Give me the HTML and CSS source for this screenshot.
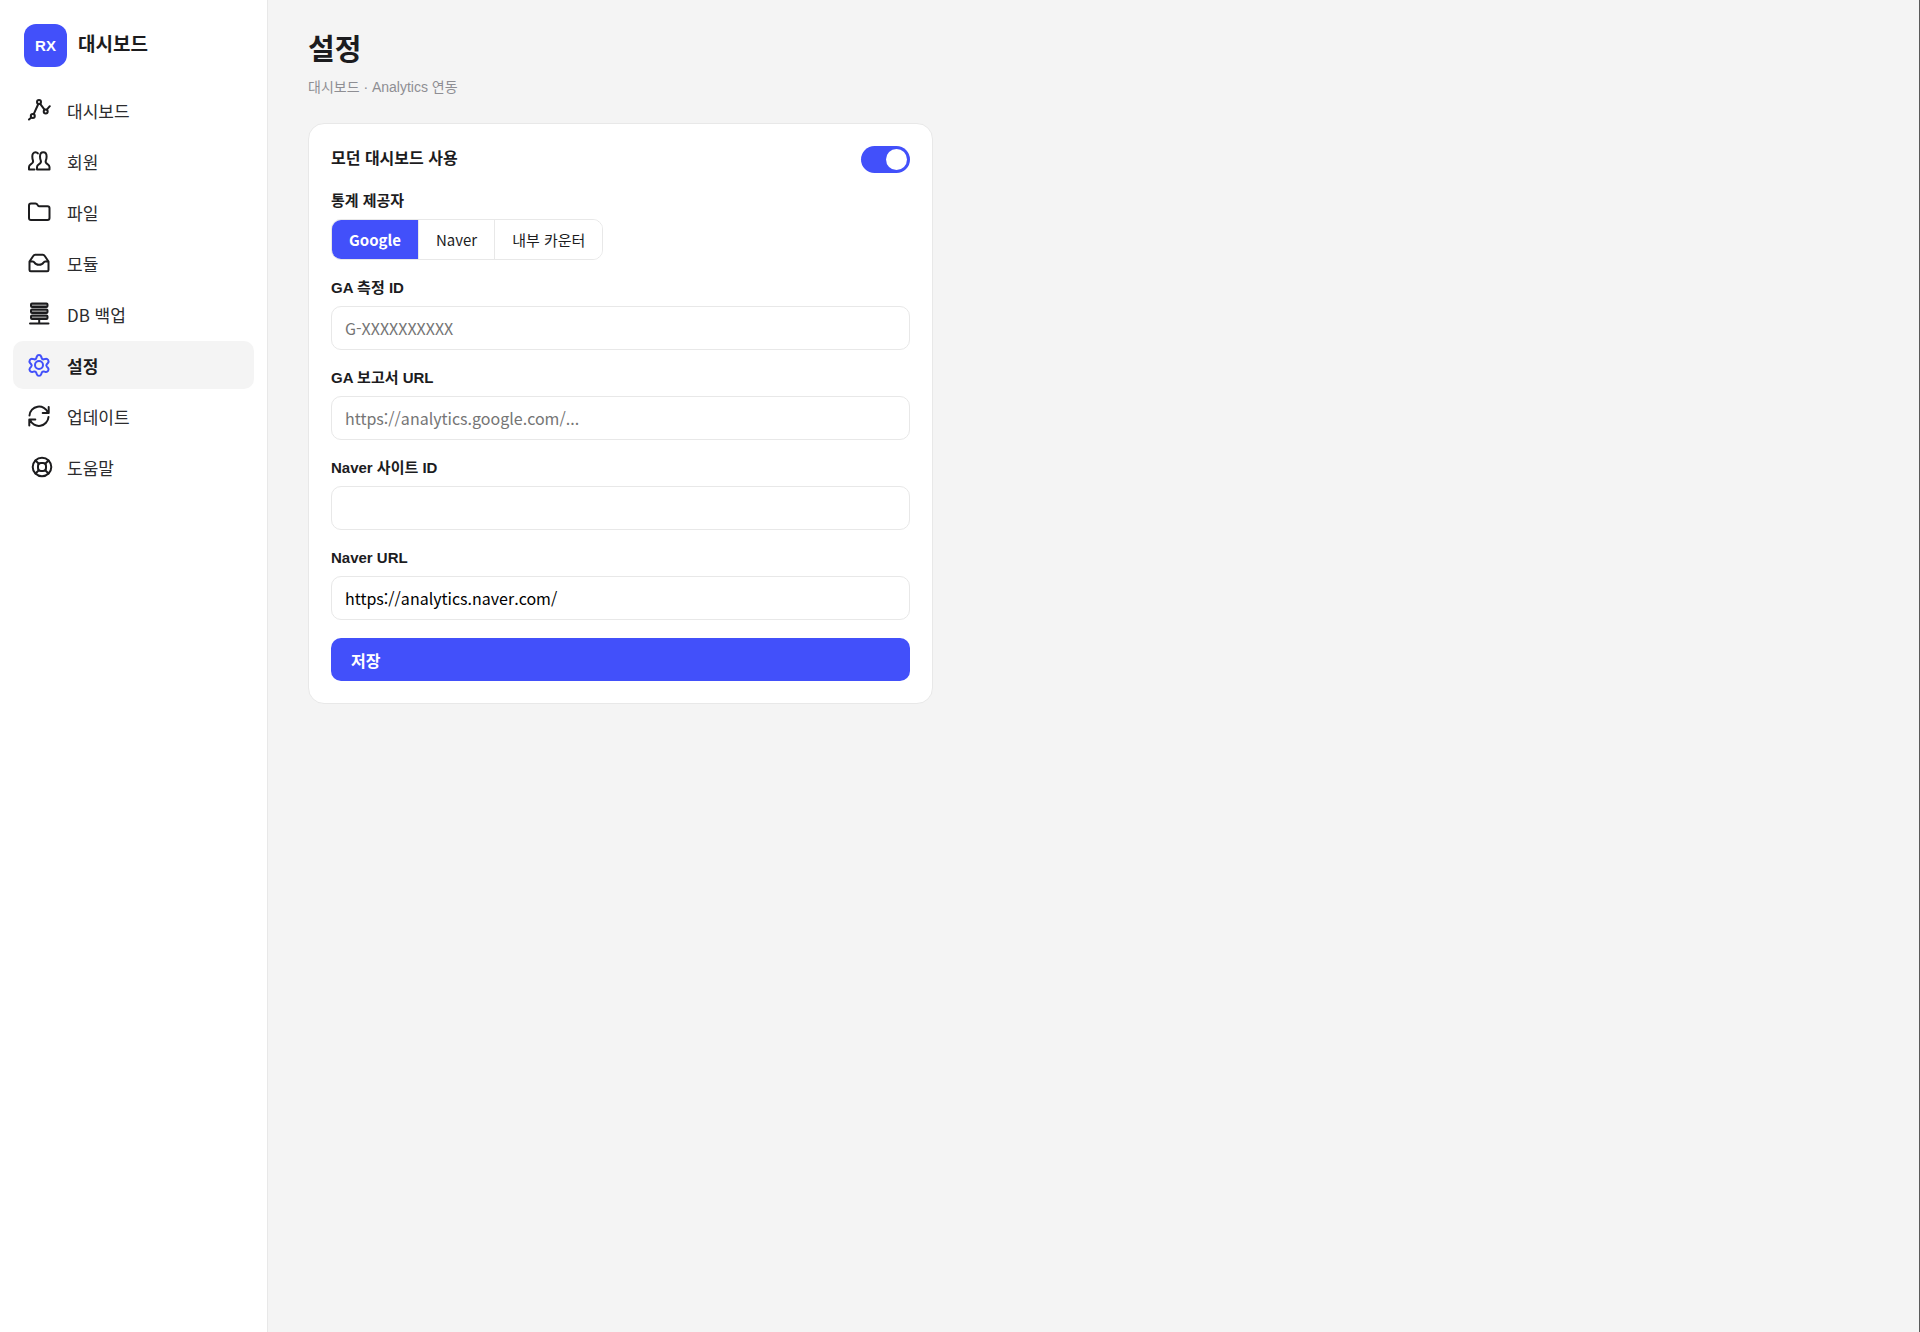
FILE: index.html
```
<!DOCTYPE html>
<html lang="ko">
<head>
    <meta charset="UTF-8">
    <meta name="viewport" content="width=device-width, initial-scale=1.0">
    <title>설정</title>
    <link rel="stylesheet" href="styles.css">
</head>
<body>
    <aside class="sidebar">
        <div class="brand">
            <span class="brand-logo">RX</span>
            <span class="brand-name">대시보드</span>
        </div>
        <nav class="menu">
            <a class="menu-item" href="#">
                <svg class="icon" viewBox="0 0 24 24"><circle cx="5.800" cy="18" r="2"/><circle cx="12" cy="4" r="2"/><circle cx="18.700" cy="13.400" r="2"/><path d="M2 21.500l2.300-2M6.700 16.200L11.300 6M13.200 5.800l4.300 5.800M19.800 11.600l3-3.400"/></svg>
                <span>대시보드</span>
            </a>
            <a class="menu-item" href="#">
                <svg class="icon" viewBox="0 0 24 24"><path d="M7.500 20.500H2v-2.600c0-1.200.7-2 2-2.800 1.600-1 2.500-2 2-3.500-.5-1.200-.7-2.200-.7-4C5.300 5 6.300 3.300 8.500 3.300c1.100 0 1.900.4 2.400 1.100"/><path d="M10 20.500h12.500v-2.600c0-1.200-.7-2-2-2.800-1.600-1-2.300-2-1.700-3.500.6-1.200.8-2.200.8-4 0-2.600-1.100-4.300-3.300-4.300S13 5 13 7.600c0 1.800.2 2.800.8 4 .6 1.500-.1 2.500-1.700 3.500-1.300.8-2.100 1.600-2.100 2.800z"/></svg>
                <span>회원</span>
            </a>
            <a class="menu-item" href="#">
                <svg class="icon" viewBox="0 0 24 24"><path d="M2 5.500C2 4.200 2.700 3.500 4 3.500h4.500c.9 0 1.400.3 1.800 1l.8 1.200c.3.400.6.500 1 .5H20.500c1.300 0 2 .7 2 2v9.800c0 1.300-.7 2-2 2H4c-1.300 0-2-.7-2-2z"/></svg>
                <span>파일</span>
            </a>
            <a class="menu-item" href="#">
                <svg class="icon" viewBox="0 0 24 24"><path d="M2.500 10.500L6.200 5c.5-.8 1-1.200 2-1.200h7.600c1 0 1.500.4 2 1.200l3.700 5.500V19c0 1-.3 1.300-1.300 1.300H3.800c-1 0-1.300-.3-1.300-1.300zM2.500 10.500h3.300c.8 0 1.200.3 1.600 1 .8 1.400 2.400 2.300 4.600 2.300s3.800-.9 4.600-2.300c.4-.7.8-1 1.600-1h3.300"/></svg>
                <span>모듈</span>
            </a>
            <a class="menu-item" href="#">
                <svg class="icon icon-db" viewBox="0 0 24 24"><rect x="4" y="1.500" width="16.500" height="3.500" rx="1"/><rect x="4" y="7.500" width="16.500" height="3.500" rx="1"/><rect x="4" y="13.500" width="16.500" height="3.500" rx="1"/><path d="M12.200 17v4.500M3 21.500h18.500"/></svg>
                <span>DB 백업</span>
            </a>
            <a class="menu-item active" href="#">
                <svg class="icon" viewBox="0 0 24 24"><circle cx="12" cy="12" r="4"/><path d="M14.200 3.600l.5 1.500c.3.900 1.200 1.400 2.100 1.200l1.600-.4c2.400-.5 4.100 2.300 2.500 4.100l-1.100 1.200c-.6.700-.6 1.700 0 2.400l1.100 1.200c1.600 1.800-.1 4.600-2.500 4.100l-1.600-.4c-.9-.2-1.800.3-2.100 1.200l-.5 1.500c-.7 2.200-3.700 2.200-4.400 0l-.5-1.500c-.3-.9-1.200-1.400-2.100-1.200l-1.600.4c-2.400.5-4.100-2.300-2.500-4.100l1.100-1.200c.6-.7.6-1.700 0-2.400L3.100 10C1.500 8.200 3.200 5.400 5.600 5.900l1.600.4c.9.200 1.800-.3 2.100-1.200l.5-1.500c.7-2.200 3.700-2.200 4.400 0z"/></svg>
                <span>설정</span>
            </a>
            <a class="menu-item" href="#">
                <svg class="icon" viewBox="0 0 24 24"><path d="M21.700 3v6h-6M2.300 21.500v-6h6M21 8.600A9.600 9.600 0 0 0 2.500 11.500M3 15.800A9.600 9.600 0 0 0 21.500 13"/></svg>
                <span>업데이트</span>
            </a>
            <a class="menu-item" href="#">
                <svg class="icon icon-help" viewBox="0 0 24 24"><circle cx="12" cy="12" r="9.300"/><rect x="8" y="8" width="8" height="8" rx="3"/><path d="M5.500 5.500l3.300 3.300M18.500 5.500l-3.300 3.300M5.500 18.500l3.300-3.300M18.500 18.500l-3.300-3.300"/></svg>
                <span>도움말</span>
            </a>
        </nav>
    </aside>

    <main class="content">
        <h1>설정</h1>
        <p class="subtitle">대시보드 · Analytics 연동</p>

        <form class="card">
            <div class="toggle-row">
                <label for="useModern">모던 대시보드 사용</label>
                <input class="toggle" type="checkbox" id="useModern" checked>
            </div>
            <fieldset class="field">
                <legend>통계 제공자</legend>
                <div class="segment">
                    <button type="button" class="active">Google</button>
                    <button type="button">Naver</button>
                    <button type="button">내부 카운터</button>
                </div>
            </fieldset>
            <div class="field">
                <label for="gaId">GA 측정 ID</label>
                <input type="text" id="gaId" placeholder="G-XXXXXXXXXX">
            </div>
            <div class="field">
                <label for="gaUrl">GA 보고서 URL</label>
                <input type="text" id="gaUrl" placeholder="https://analytics.google.com/...">
            </div>
            <div class="field">
                <label for="naverId">Naver 사이트 ID</label>
                <input type="text" id="naverId">
            </div>
            <div class="field">
                <label for="naverUrl">Naver URL</label>
                <input type="text" id="naverUrl" value="https://analytics.naver.com/">
            </div>
            <button type="submit" class="save">저장</button>
        </form>
    </main>
</body>
</html>
```
FILE: styles.css
```
* {
    box-sizing: border-box;
}
body {
    display: flex;
    min-height: 100vh;
    margin: 0;
    background-color: #f4f4f4;
    border-right: 1px solid #5a5a5a;
    color: #1c1c1e;
    font-family: "Liberation Sans", "Noto Sans CJK KR", sans-serif;
    font-size: 14px;
}

/* Sidebar */
.sidebar {
    flex: none;
    width: 268px;
    padding: 24px 13px;
    background-color: #fff;
    border-right: 1px solid #e8e8e8;
}
.brand {
    display: flex;
    align-items: center;
    gap: 11px;
    padding: 0 11px;
    margin-bottom: 19px;
}
.brand-logo {
    display: flex;
    justify-content: center;
    align-items: center;
    width: 43px;
    height: 43px;
    border-radius: 12px;
    background-color: #4250fa;
    color: #fff;
    font-size: 15px;
    font-weight: bold;
}
.brand-name {
    padding-bottom: 2px;
    font-size: 19px;
    font-weight: bold;
    line-height: 24px;
}
.menu {
    display: flex;
    flex-direction: column;
    gap: 3px;
}
.menu-item {
    display: flex;
    align-items: center;
    gap: 16px;
    height: 48px;
    padding: 0 14px;
    border-radius: 10px;
    color: #2c2c2e;
    font-family: "Noto Sans CJK KR", sans-serif;
    font-size: 17px;
    text-decoration: none;
}
.menu-item.active {
    background-color: #f4f4f4;
    color: #1c1c1e;
    font-weight: bold;
}
.icon {
    width: 24px;
    height: 24px;
    fill: none;
    stroke: #1c1c1e;
    stroke-width: 2;
    stroke-linecap: round;
    stroke-linejoin: round;
}
.icon-db {
    fill: #888;
}
.icon-help {
    margin: 0 -3px 0 3px;
}
.active .icon {
    stroke: #4250fa;
}

/* Settings */
.content {
    flex: 1;
    padding: 28px 40px;
}
h1 {
    margin: 0;
    font-size: 29px;
    line-height: 44px;
}
.subtitle {
    margin: 4px 0 25px;
    color: #8e8e93;
    font-size: 14px;
    line-height: 22px;
}
.card {
    display: flex;
    flex-direction: column;
    gap: 18px;
    max-width: 625px;
    padding: 22px;
    background-color: #fff;
    border: 1px solid #e8e8e8;
    border-radius: 16px;
}
.toggle-row {
    display: flex;
    justify-content: space-between;
    align-items: flex-start;
    font-size: 16px;
    font-weight: bold;
    line-height: 26px;
}
.toggle {
    appearance: none;
    display: flex;
    justify-content: flex-end;
    align-items: center;
    width: 49px;
    height: 27px;
    margin: 0;
    padding: 0 3px;
    border-radius: 14px;
    background-color: #ccc;
}
.toggle:not(:checked) {
    justify-content: flex-start;
}
.toggle:checked {
    background-color: #4250fa;
}
.toggle::before {
    content: "";
    width: 21px;
    height: 21px;
    border-radius: 50%;
    background-color: #fff;
}
.field {
    display: flex;
    flex-direction: column;
    gap: 8px;
    min-width: 0;
    margin: 0;
    padding: 0;
    border: none;
}
.field label,
legend {
    padding: 0;
    font-size: 15px;
    font-weight: bold;
    line-height: 20px;
}
legend {
    margin-bottom: 8px;
}
.field input {
    width: 100%;
    height: 44px;
    padding: 0 13px;
    background-color: #fff;
    border: 1px solid #e8e8e8;
    border-radius: 10px;
    color: #000;
    font-family: "Noto Sans CJK KR", sans-serif;
    font-size: 16px;
}
.field input::placeholder {
    color: #757575;
}
.segment {
    display: flex;
    width: fit-content;
    overflow: hidden;
    border: 1px solid #e8e8e8;
    border-radius: 10px;
}
.segment button {
    height: 39px;
    padding: 0 17px;
    background-color: #fff;
    border: none;
    border-left: 1px solid #e8e8e8;
    color: #1c1c1e;
    font-family: "Noto Sans CJK KR", sans-serif;
    font-size: 15px;
}
.segment button:first-child {
    border-left: none;
}
.segment button.active {
    background-color: #4250fa;
    color: #fff;
    font-weight: bold;
}
.save {
    height: 43px;
    padding: 0 20px;
    background-color: #4250fa;
    border: none;
    border-radius: 10px;
    color: #fff;
    font-family: "Noto Sans CJK KR", sans-serif;
    font-size: 16px;
    font-weight: bold;
    text-align: left;
}
```
